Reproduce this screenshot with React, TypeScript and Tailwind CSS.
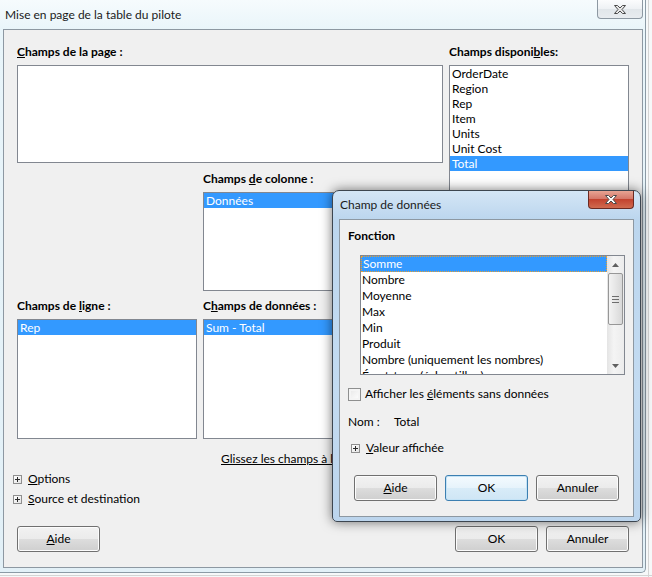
import type { ReactNode } from 'react';

function PlusBox() {
  return (
    <svg width="9" height="9" viewBox="0 0 9 9" className="shrink-0">
      <defs>
        <linearGradient id="pb" x1="0" y1="0" x2="1" y2="1">
          <stop offset="0" stopColor="#ffffff" />
          <stop offset="1" stopColor="#e3e3e3" />
        </linearGradient>
      </defs>
      <rect x="0.5" y="0.5" width="8" height="8" fill="url(#pb)" stroke="#8f8f8f" />
      <path d="M2 4.5h5M4.5 2v5" stroke="#2b2b2b" />
    </svg>
  );
}

function Btn({ children, focus = false }: { children: ReactNode; focus?: boolean }) {
  return (
    <div
      className={`w-[83px] h-[26px] rounded-[3px] border flex items-center justify-center ${
        focus
          ? 'border-[#3c7fb1] bg-[linear-gradient(#f4fafe,#e6f3fb_50%,#d8ecf8_50%,#cfe6f5)] shadow-[inset_0_0_0_1px_#c4e3f6]'
          : 'border-[#707070] bg-[linear-gradient(#f2f2f2,#ebebeb_50%,#dddddd_50%,#cfcfcf)] shadow-[inset_0_0_0_1px_#fcfcfc]'
      }`}
    >
      {children}
    </div>
  );
}

function ListBox({ items, selected, className }: { items: string[]; selected?: number; className: string }) {
  return (
    <div className={`border border-[#828790] bg-white overflow-hidden ${className}`}>
      {items.map((it, i) => (
        <div
          key={it}
          className={`h-[15px] leading-[15px] pl-[2px] whitespace-nowrap ${i === selected ? 'bg-[#3399ff] text-white' : ''}`}
        >
          {it}
        </div>
      ))}
    </div>
  );
}

function CloseGlyph({ color }: { color: string }) {
  return (
    <svg width="14" height="11" viewBox="0 0 14 11">
      <path
        d="M1.5 1.5h3l2.5 2.5 2.5-2.5h3L9 5.5l3.5 4h-3L7 7l-2.5 2.5h-3L5 5.5z"
        fill={color}
        stroke="#4a4a4a"
        strokeWidth="1"
        strokeLinejoin="round"
      />
    </svg>
  );
}

const fonctions = [
  'Somme',
  'Nombre',
  'Moyenne',
  'Max',
  'Min',
  'Produit',
  'Nombre (uniquement les nombres)',
  'Écart-type (échantillon)',
];

export default function App() {
  return (
    <div className="relative w-[652px] h-[577px] overflow-hidden bg-[#f6f8f9] text-[12px] leading-[16px] text-black font-['Lato','Noto_Sans',sans-serif]">
      {/* grid lines of the sheet behind */}
      <div className="absolute left-[648px] top-0 w-px h-full bg-[#d4d4d4]" />
      <div className="absolute left-0 top-[575px] w-full h-px bg-[#d4d4d4]" />

      {/* main window */}
      <div className="absolute left-0 top-0 w-[646px] h-[573px] rounded-br-[5px] border-r border-b border-[#8b9aa5] bg-[linear-gradient(180deg,#f6fbfd,#e9f5fa_30px,#e2f0f7)] flex flex-col">
        <div className="h-[29px] shrink-0 flex items-center pl-[5px] text-[#1a1a1a]">
          Mise en page de la table du pilote
        </div>
        <div className="absolute left-[597px] top-0 w-[46px] h-[19px] rounded-b-[4px] border border-t-0 border-[#8d98a2] bg-[linear-gradient(#fbfcfd,#eef1f4_50%,#e1e6ea_50%,#e8ecef)] flex items-center justify-center">
          <CloseGlyph color="#e9e9e9" />
        </div>

        {/* client */}
        <div className="ml-[3px] w-[640px] h-[539px] border border-[#8d98a2] bg-[#f0f0f0] pl-[13px] pt-[14px] flex flex-col">
          <div className="flex gap-[6px]">
            <div className="w-[426px] flex flex-col">
              <div className="font-bold">
                <span className="underline">C</span>hamps de la page :
              </div>
              <div className="mt-[5px] h-[98px] border border-[#828790] bg-white" />

              <div className="mt-[8px] pl-[186px] flex flex-col">
                <div className="font-bold">
                  Champs <span className="underline">d</span>e colonne :
                </div>
                <ListBox items={['Données']} selected={0} className="mt-[5px] w-[180px] h-[99px]" />
              </div>

              <div className="mt-[7px] flex gap-[6px]">
                <div className="w-[180px] flex flex-col">
                  <div className="font-bold">
                    Champs de <span className="underline">l</span>igne :
                  </div>
                  <ListBox items={['Rep']} selected={0} className="mt-[5px] h-[120px]" />
                </div>
                <div className="w-[180px] flex flex-col">
                  <div className="font-bold">
                    C<span className="underline">h</span>amps de données :
                  </div>
                  <ListBox items={['Sum - Total']} selected={0} className="mt-[5px] h-[120px]" />
                </div>
              </div>
            </div>

            <div className="w-[180px] flex flex-col">
              <div className="font-bold">
                Champs disponi<span className="underline">b</span>les:
              </div>
              <ListBox
                items={['OrderDate', 'Region', 'Rep', 'Item', 'Units', 'Unit Cost', 'Total']}
                selected={6}
                className="mt-[5px] h-[374px]"
              />
            </div>
          </div>

          <div className="mt-[12px] ml-[204px] w-[111px] overflow-hidden whitespace-nowrap underline">
            Glissez les champs à l'emplacement souhaité
          </div>

          <div className="mt-[4px] ml-[-4px] flex items-center gap-[6px]">
            <PlusBox />
            <span>
              <span className="underline">O</span>ptions
            </span>
          </div>
          <div className="mt-[4px] ml-[-4px] flex items-center gap-[6px]">
            <PlusBox />
            <span>
              <span className="underline">S</span>ource et destination
            </span>
          </div>

          <div className="mt-[19px] flex w-[612px]">
            <Btn>
              <span className="underline">A</span>ide
            </Btn>
            <div className="ml-auto flex gap-[8px]">
              <Btn>OK</Btn>
              <Btn>Annuler</Btn>
            </div>
          </div>
        </div>
      </div>

      {/* data field dialog */}
      <div className="absolute left-[332px] top-[190px] w-[309px] h-[332px] rounded-t-[7px] rounded-b-[5px] border border-[#3d4650] bg-[linear-gradient(180deg,#d4e6f6,#bcd6ee_28px,#c3dbf1_60%,#bcd5ed)] shadow-[0_0_12px_rgba(0,0,0,0.55)] flex flex-col">
        <div className="h-[28px] shrink-0 flex items-center pl-[7px] text-[#1a1a1a]">Champ de données</div>
        <div className="absolute left-[255px] top-0 w-[46px] h-[18px] rounded-b-[4px] border border-t-0 border-[#6b2a22] bg-[linear-gradient(#e8a493,#d5786a_45%,#c3432f_50%,#d06a4f)] flex items-center justify-center">
          <CloseGlyph color="#ffffff" />
        </div>

        <div className="ml-[6px] w-[295px] h-[298px] border border-[#8d98a2] bg-[#f0f0f0] pl-[8px] pt-[8px] flex flex-col">
          <div className="font-bold">Fonction</div>
          <div className="mt-[11px] ml-[12px] w-[265px] h-[120px] border border-[#828790] bg-white flex overflow-hidden">
            <div className="flex-1 overflow-hidden">
              {fonctions.map((f, i) => (
                <div
                  key={f}
                  className={`h-[16px] pl-[1px] whitespace-nowrap ${
                    i === 0 ? 'bg-[#3399ff] text-white border border-dotted border-[#e8a030] leading-[14px]' : 'leading-[16px]'
                  }`}
                >
                  {f}
                </div>
              ))}
            </div>
            <div className="w-[17px] shrink-0 bg-[linear-gradient(90deg,#e4e4e4,#f4f4f4_40%,#ececec)] flex flex-col items-center">
              <div className="h-[17px] flex items-center justify-center">
                <svg width="7" height="4" viewBox="0 0 7 4">
                  <path d="M0 4L3.5 0 7 4z" fill="#606060" />
                </svg>
              </div>
              <div className="w-[15px] h-[52px] rounded-[2px] border border-[#979797] bg-[linear-gradient(90deg,#f3f3f3,#e6e6e6_50%,#d8d8d8)] flex flex-col items-center justify-center gap-[2px]">
                <div className="w-[7px] h-px bg-[#6d6d6d]" />
                <div className="w-[7px] h-px bg-[#6d6d6d]" />
                <div className="w-[7px] h-px bg-[#6d6d6d]" />
              </div>
              <div className="flex-1" />
              <div className="h-[17px] flex items-center justify-center">
                <svg width="7" height="4" viewBox="0 0 7 4">
                  <path d="M0 0L3.5 4 7 0z" fill="#606060" />
                </svg>
              </div>
            </div>
          </div>

          <div className="mt-[11px] flex items-center gap-[4px]">
            <div className="w-[13px] h-[13px] border border-[#8e8f8f] bg-[linear-gradient(135deg,#e6e6e6,#ffffff)] shadow-[inset_0_0_0_2px_#f4f4f4]" />
            <span>
              Afficher les <span className="underline">é</span>léments sans données
            </span>
          </div>

          <div className="mt-[12px] flex">
            <span className="w-[46px]">Nom :</span>
            <span>Total</span>
          </div>

          <div className="mt-[10px] ml-[3px] flex items-center gap-[6px]">
            <PlusBox />
            <span>
              <span className="underline">V</span>aleur affichée
            </span>
          </div>

          <div className="mt-[19px] ml-[6px] flex gap-[8px]">
            <Btn>
              <span className="underline">A</span>ide
            </Btn>
            <Btn focus>OK</Btn>
            <Btn>Annuler</Btn>
          </div>
        </div>
      </div>
    </div>
  );
}
